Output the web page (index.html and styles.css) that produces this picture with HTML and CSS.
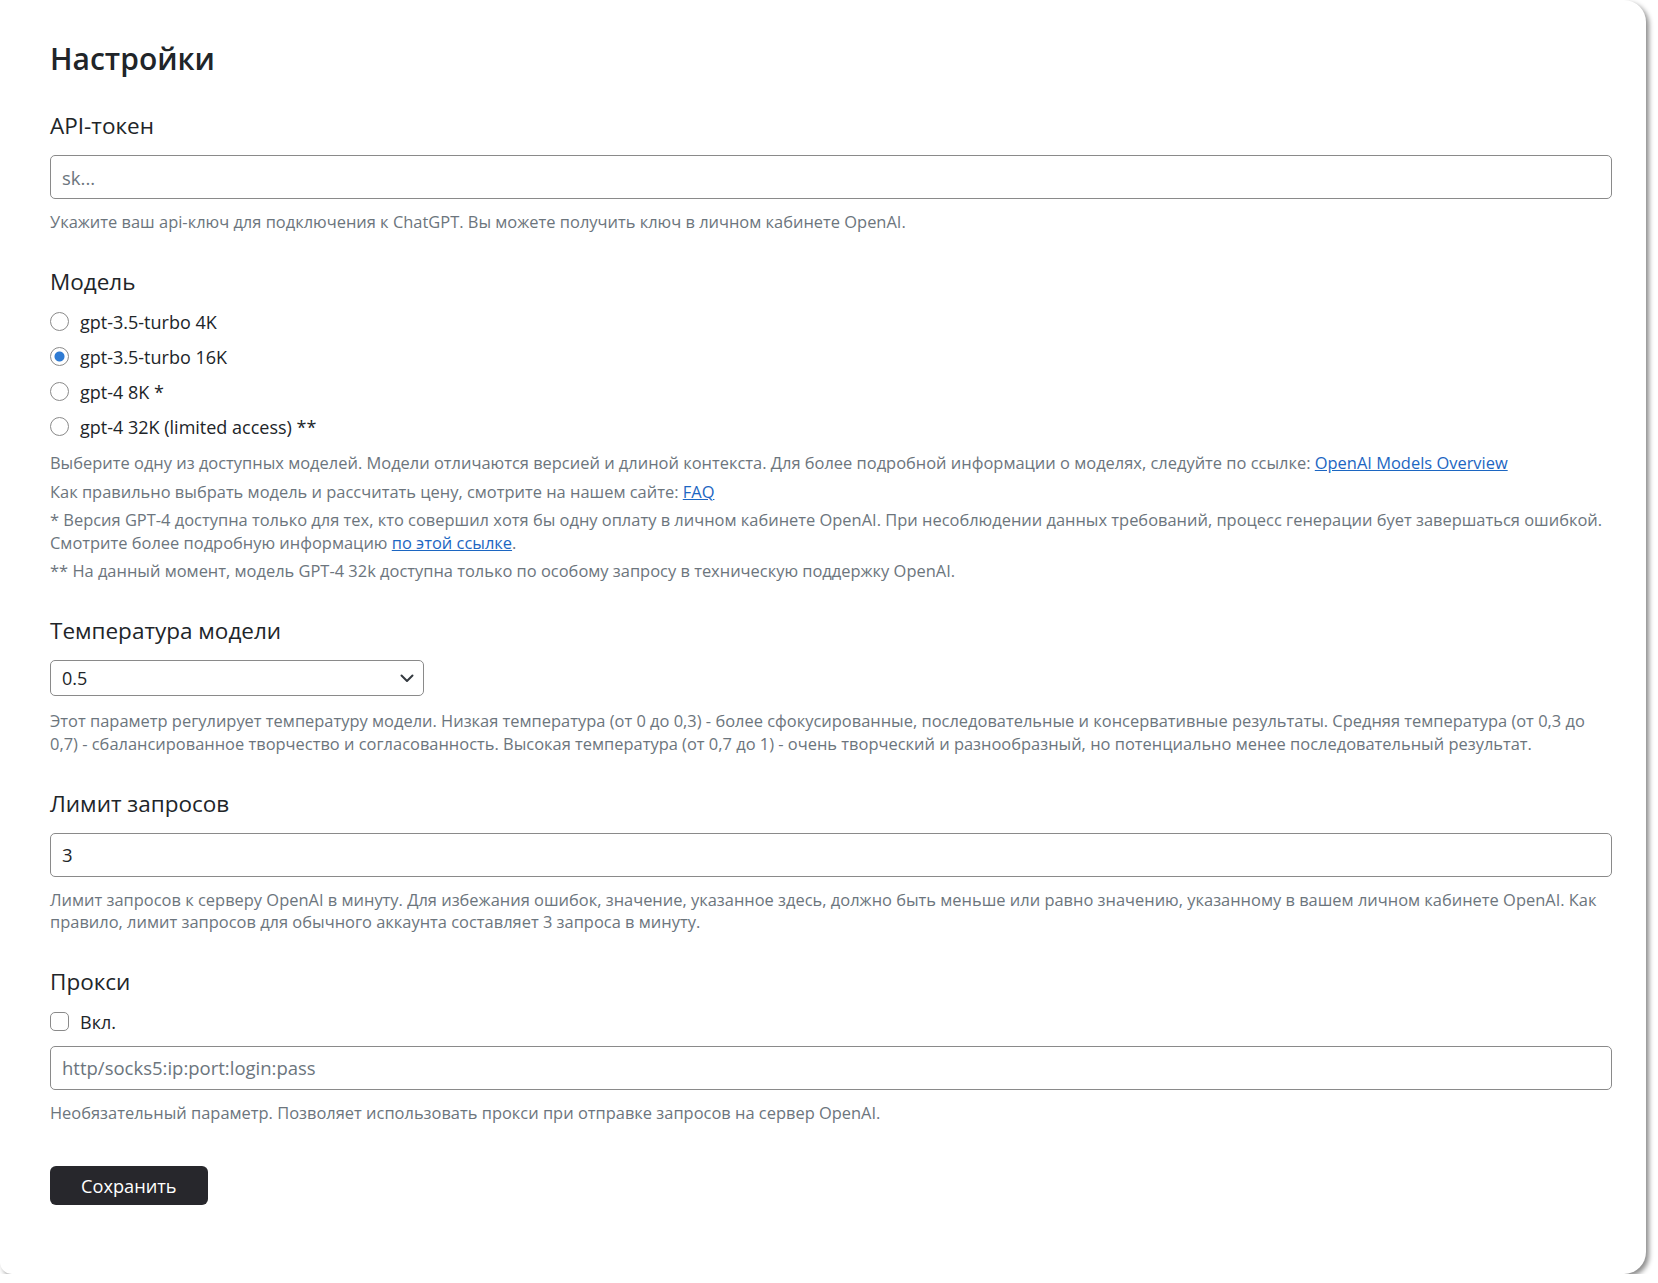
FILE: index.html
```html
<!DOCTYPE html>
<html lang="ru">
<head>
    <meta charset="UTF-8">
    <meta name="viewport" content="width=device-width, initial-scale=1.0">
    <title>Настройки</title>
    <link rel="stylesheet" href="styles.css">
</head>
<body>

    <div class="card">
        <h2 class="title">Настройки</h2>
        <form class="settings" id="settingsForm">

            <div class="field">
                <label class="field-label" for="apiToken">API-токен</label>
                <input class="input" type="text" id="apiToken" name="apiToken" placeholder="sk...">
                <p class="hint">Укажите ваш api-ключ для подключения к ChatGPT. Вы можете получить ключ в личном кабинете OpenAI.</p>
            </div>

            <div class="field">
                <div class="field-label">Модель</div>
                <div class="choices">
                    <label class="check"><input type="radio" name="model" value="gpt-3.5-turbo"> gpt-3.5-turbo 4K</label>
                    <label class="check"><input type="radio" name="model" value="gpt-3.5-turbo-16k" checked> gpt-3.5-turbo 16K</label>
                    <label class="check"><input type="radio" name="model" value="gpt-4"> gpt-4 8K *</label>
                    <label class="check"><input type="radio" name="model" value="gpt-4-32k"> gpt-4 32K (limited access) **</label>
                </div>
                <div class="hints">
                    <p class="hint">Выберите одну из доступных моделей. Модели отличаются версией и длиной контекста. Для более подробной информации о моделях, следуйте по ссылке: <a href="#">OpenAI Models Overview</a></p>
                    <p class="hint">Как правильно выбрать модель и рассчитать цену, смотрите на нашем сайте: <a href="#">FAQ</a></p>
                    <p class="hint">* Версия GPT-4 доступна только для тех, кто совершил хотя бы одну оплату в личном кабинете OpenAI. При несоблюдении данных требований, процесс генерации бует завершаться ошибкой.<br>Смотрите более подробную информацию <a href="#">по этой ссылке</a>.</p>
                    <p class="hint">** На данный момент, модель GPT-4 32k доступна только по особому запросу в техническую поддержку OpenAI.</p>
                </div>
            </div>

            <div class="field">
                <label class="field-label" for="temperature">Температура модели</label>
                <div class="select-wrap">
                    <select class="select" id="temperature" name="temperature">
                        <option>0</option>
                        <option>0.1</option>
                        <option>0.2</option>
                        <option>0.3</option>
                        <option>0.4</option>
                        <option selected>0.5</option>
                        <option>0.6</option>
                        <option>0.7</option>
                        <option>0.8</option>
                        <option>0.9</option>
                        <option>1</option>
                    </select>
                    <svg class="select-arrow" width="14" height="9" viewBox="0 0 14 9"><path d="M1.5 1.5 7 7l5.5-5.5" fill="none" stroke="#343a40" stroke-width="2" stroke-linecap="round" stroke-linejoin="round"/></svg>
                </div>
                <p class="hint">Этот параметр регулирует температуру модели. Низкая температура (от 0 до 0,3) - более сфокусированные, последовательные и консервативные результаты. Средняя температура (от 0,3 до<br>0,7) - сбалансированное творчество и согласованность. Высокая температура (от 0,7 до 1) - очень творческий и разнообразный, но потенциально менее последовательный результат.</p>
            </div>

            <div class="field">
                <label class="field-label" for="rateLimit">Лимит запросов</label>
                <input class="input" type="text" id="rateLimit" name="rateLimit" value="3">
                <p class="hint">Лимит запросов к серверу OpenAI в минуту. Для избежания ошибок, значение, указанное здесь, должно быть меньше или равно значению, указанному в вашем личном кабинете OpenAI. Как<br>правило, лимит запросов для обычного аккаунта составляет 3 запроса в минуту.</p>
            </div>

            <div class="field">
                <div class="field-label">Прокси</div>
                <label class="check proxy-toggle"><input type="checkbox" name="proxyOn"> Вкл.</label>
                <input class="input proxy-input" type="text" id="proxy" name="proxy" placeholder="http/socks5:ip:port:login:pass">
                <p class="hint">Необязательный параметр. Позволяет использовать прокси при отправке запросов на сервер OpenAI.</p>
            </div>

            <div class="actions">
                <button type="submit" class="btn">Сохранить</button>
            </div>
        </form>
    </div>

</body>
</html>
```

FILE: styles.css
```css
body {
    margin: 0;
    background: #ffffff;
    font-family: "Open Sans", "Noto Sans", sans-serif;
    color: #212529;
}
.card {
    box-sizing: border-box;
    width: 1646px;
    min-height: 1274px;
    padding: 40px 34px 68px 50px;
    background: #ffffff;
    border-radius: 0 22px 22px 12px;
    box-shadow: 3px 3px 5px rgba(0, 0, 0, 0.45);
}
.title {
    margin: 0 0 33px;
    font-size: 30px;
    line-height: 38px;
    font-weight: 600;
}
.settings {
    display: flex;
    flex-direction: column;
    gap: 33.5px;
}
.field {
    display: flex;
    flex-direction: column;
}
.field-label {
    display: block;
    font-size: 22.5px;
    line-height: 30px;
    margin-bottom: 14px;
}
.input {
    box-sizing: border-box;
    width: 100%;
    height: 44px;
    padding: 0 11px;
    border: 1px solid #8a8a8a;
    border-radius: 5px;
    font-family: inherit;
    font-size: 18.5px;
    color: #212529;
}
.input::placeholder {
    color: #6c757d;
}
.hint {
    margin: 12px 0 0;
    font-size: 16.45px;
    line-height: 22.5px;
    color: #6c757d;
}
.hint a {
    color: #1c66c2;
}
.choices {
    display: flex;
    flex-direction: column;
    margin-top: -7px;
}
.check {
    display: flex;
    align-items: center;
    gap: 11px;
    height: 35px;
    font-size: 18px;
}
.check input {
    appearance: none;
    margin: 0;
    width: 19px;
    height: 19px;
    border: 1px solid #8a8a8a;
    background: #ffffff;
    flex-shrink: 0;
}
.check input[type="radio"] {
    border-radius: 50%;
}
.check input[type="radio"]:checked {
    background: radial-gradient(circle, #2f7bd3 0 4.5px, #ffffff 5.5px);
}
.check input[type="checkbox"] {
    border-radius: 5px;
}
.hints {
    display: flex;
    flex-direction: column;
    gap: 6px;
    margin-top: 8px;
}
.hints .hint {
    margin: 0;
}
.select-wrap {
    position: relative;
    width: 374px;
    margin-bottom: 2px;
}
.select {
    appearance: none;
    box-sizing: border-box;
    width: 100%;
    height: 36px;
    padding: 0 36px 0 11px;
    border: 1px solid #8a8a8a;
    border-radius: 5px;
    background: #ffffff;
    font-family: inherit;
    font-size: 18px;
    color: #212529;
}
.select-arrow {
    position: absolute;
    right: 10px;
    top: 14px;
    pointer-events: none;
}
.proxy-toggle {
    margin-top: -7px;
}
.proxy-input {
    margin-top: 6.5px;
}
.actions {
    margin-top: 8.5px;
}
.btn {
    height: 39px;
    padding: 0 31px;
    border: none;
    border-radius: 6px;
    background: #27272c;
    color: #ffffff;
    font-family: inherit;
    font-size: 18.2px;
    font-weight: 500;
    cursor: pointer;
}
.btn:hover {
    background: #3a3a40;
}
```
